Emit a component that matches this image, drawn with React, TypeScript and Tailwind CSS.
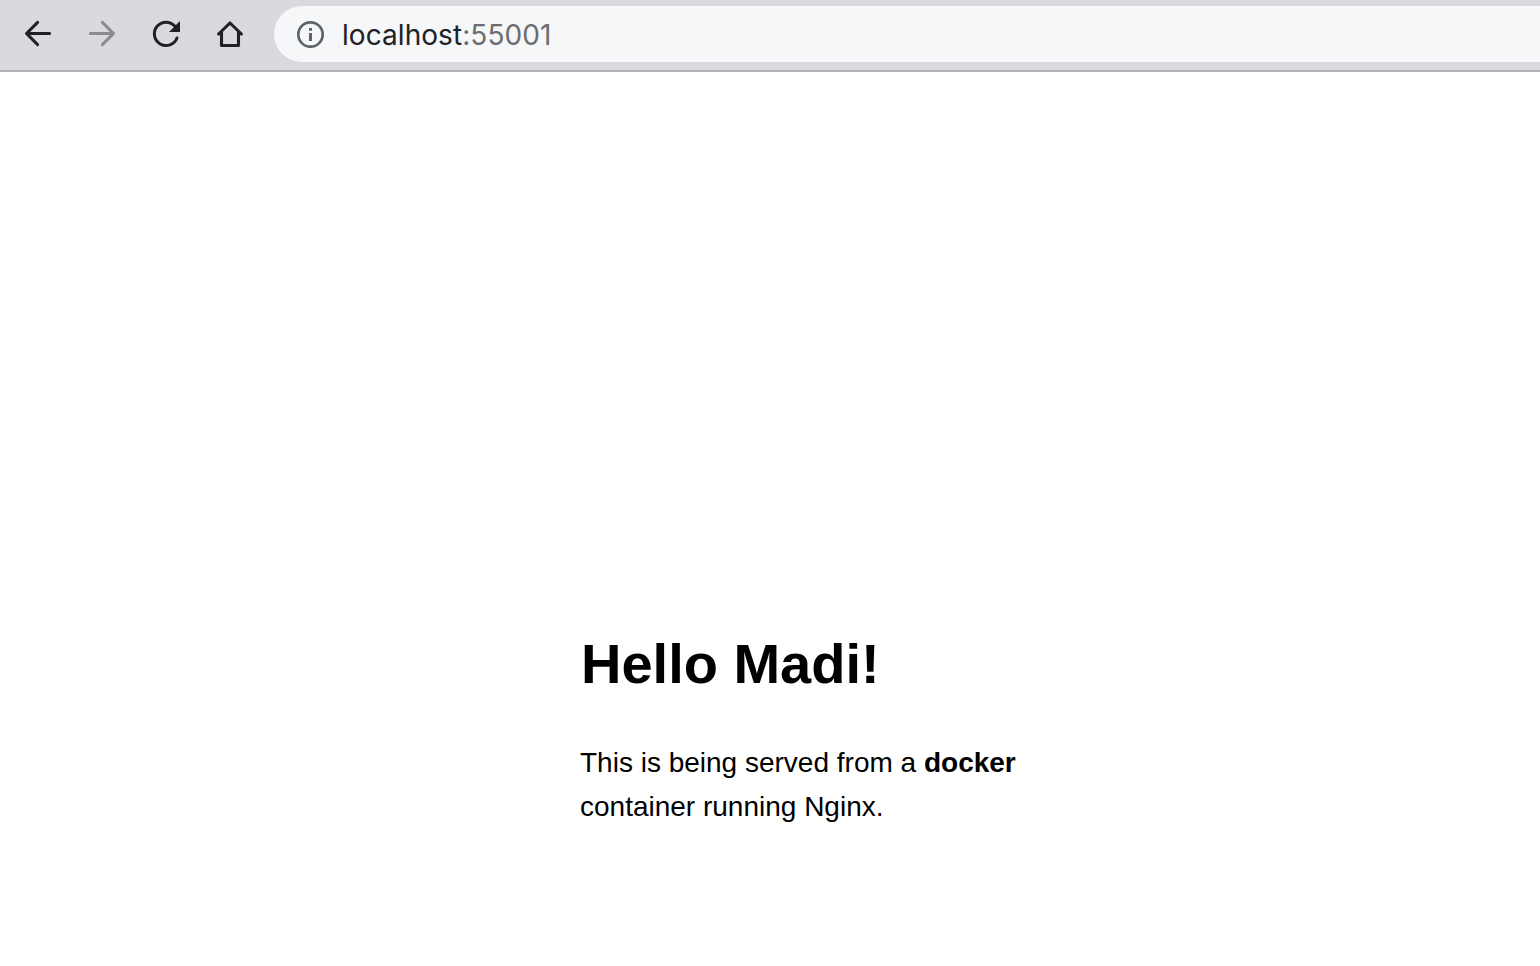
import React from "react";

export default function App() {
  return (
    <div className="flex h-[966px] w-[1540px] flex-col overflow-hidden bg-white">
      <header className="flex h-[72px] shrink-0 items-start border-b-2 border-[#b2afb5] bg-[#d9dadf] pt-[6px]">
        <nav className="flex h-14 items-center gap-6 pl-[18px]">
          <svg width="40" height="40" viewBox="0 0 40 40" fill="none" stroke="#202124" strokeWidth="3" strokeLinecap="round" strokeLinejoin="round">
            <path d="M31.600 19.500H8.500M19.600 8.400L8.500 19.500l11.100 11.100" />
          </svg>
          <svg width="40" height="40" viewBox="0 0 40 40" fill="none" stroke="#8a8b8e" strokeWidth="3" strokeLinecap="round" strokeLinejoin="round">
            <path d="M8.400 19.500H31.500M20.400 8.400l11.100 11.100-11.100 11.100" />
          </svg>
          <svg width="40" height="40" viewBox="0 0 40 40" fill="none" stroke="#202124" strokeWidth="3" strokeLinecap="round">
            <path d="M29 12.300A11.700 11.700 0 1 0 31 24" />
            <path d="M34 7v11H23z" fill="#202124" stroke="none" />
          </svg>
          <svg width="40" height="40" viewBox="0 0 40 40" fill="none" stroke="#202124" strokeWidth="3.1" strokeLinecap="round" strokeLinejoin="round">
            <path d="M8.600 20L20 9l11.400 11M11.500 18v13.500h17V18" />
          </svg>
        </nav>
        <div className="ml-6 flex h-14 flex-1 items-center rounded-l-full bg-[#f5f7f9] pl-[22px]">
          <svg width="28" height="28" viewBox="0 0 28 28" fill="none" stroke="#5f6368" strokeWidth="2.7">
            <circle cx="14.5" cy="14.5" r="12.200" />
            <path d="M14.500 13v8M14.500 8v2.800" strokeWidth="3" />
          </svg>
          <span className="ml-[18px] whitespace-pre pt-px font-['Inter',sans-serif] text-[28px] leading-none tracking-[0.06px] text-[#202124]">
            localhost<span className="text-[#6b6d70]">:55001</span>
          </span>
        </div>
      </header>
      <main className="ml-[580px] mt-[556px] w-[480px] font-['Liberation_Sans',sans-serif] text-black">
        <h1 className="whitespace-nowrap pl-px text-[56px] font-bold leading-[71px]">Hello Madi!</h1>
        <p className="mt-[42px] text-[28px] leading-[44px]">
          This is being served from a <b>docker</b>
          <br />
          container running Nginx.
        </p>
      </main>
    </div>
  );
}
